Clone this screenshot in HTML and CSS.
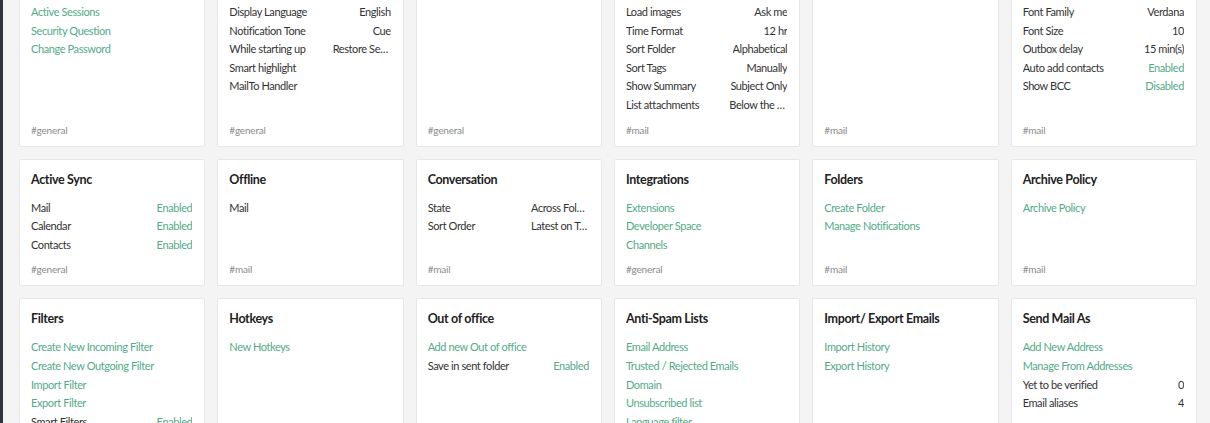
FILE: index.html
```html
<!DOCTYPE html>
<html>
<head>
<meta charset="utf-8">
<link rel="stylesheet" href="styles.css">
</head>
<body>
<div class="app">
  <aside class="rail"></aside>
  <main class="main">
    <div class="grid">
      <section class="card">
        <h3 class="title">Security</h3>
        <div class="items">
          <a class="link">Active Sessions</a>
          <a class="link">Security Question</a>
          <a class="link">Change Password</a>
        </div>
        <div class="tag">#general</div>
      </section>
      <section class="card">
        <h3 class="title">General</h3>
        <div class="items">
          <div class="row"><span class="k">Display Language</span><span class="v">English</span></div>
          <div class="row"><span class="k">Notification Tone</span><span class="v">Cue</span></div>
          <div class="row"><span class="k">While starting up</span><span class="v">Restore Session</span></div>
          <div class="row"><span class="k">Smart highlight</span></div>
          <div class="row"><span class="k">MailTo Handler</span></div>
        </div>
        <div class="tag">#general</div>
      </section>
      <section class="card">
        <h3 class="title">Themes</h3>
        <div class="items"></div>
        <div class="tag">#general</div>
      </section>
      <section class="card">
        <h3 class="title">Mail View Options</h3>
        <div class="items">
          <div class="row"><span class="k">Load images</span><span class="v">Ask me</span></div>
          <div class="row"><span class="k">Time Format</span><span class="v">12 hr</span></div>
          <div class="row"><span class="k">Sort Folder</span><span class="v">Alphabetical</span></div>
          <div class="row"><span class="k">Sort Tags</span><span class="v">Manually</span></div>
          <div class="row"><span class="k">Show Summary</span><span class="v">Subject Only</span></div>
          <div class="row"><span class="k">List attachments</span><span class="v">Below the mail</span></div>
        </div>
        <div class="tag">#mail</div>
      </section>
      <section class="card">
        <h3 class="title">Signature</h3>
        <div class="items"></div>
        <div class="tag">#mail</div>
      </section>
      <section class="card">
        <h3 class="title">Compose</h3>
        <div class="items">
          <div class="row"><span class="k">Font Family</span><span class="v">Verdana</span></div>
          <div class="row"><span class="k">Font Size</span><span class="v">10</span></div>
          <div class="row"><span class="k">Outbox delay</span><span class="v">15 min(s)</span></div>
          <div class="row"><span class="k">Auto add contacts</span><span class="v on">Enabled</span></div>
          <div class="row"><span class="k">Show BCC</span><span class="v on">Disabled</span></div>
        </div>
        <div class="tag">#mail</div>
      </section>

      <section class="card">
        <h3 class="title">Active Sync</h3>
        <div class="items">
          <div class="row"><span class="k">Mail</span><span class="v on">Enabled</span></div>
          <div class="row"><span class="k">Calendar</span><span class="v on">Enabled</span></div>
          <div class="row"><span class="k">Contacts</span><span class="v on">Enabled</span></div>
        </div>
        <div class="tag">#general</div>
      </section>
      <section class="card">
        <h3 class="title">Offline</h3>
        <div class="items">
          <div class="row"><span class="k">Mail</span></div>
        </div>
        <div class="tag">#mail</div>
      </section>
      <section class="card">
        <h3 class="title">Conversation</h3>
        <div class="items">
          <div class="row"><span class="k">State</span><span class="v">Across Folders</span></div>
          <div class="row"><span class="k">Sort Order</span><span class="v">Latest on Top</span></div>
        </div>
        <div class="tag">#mail</div>
      </section>
      <section class="card">
        <h3 class="title">Integrations</h3>
        <div class="items">
          <a class="link">Extensions</a>
          <a class="link">Developer Space</a>
          <a class="link">Channels</a>
        </div>
        <div class="tag">#general</div>
      </section>
      <section class="card">
        <h3 class="title">Folders</h3>
        <div class="items">
          <a class="link">Create Folder</a>
          <a class="link">Manage Notifications</a>
        </div>
        <div class="tag">#mail</div>
      </section>
      <section class="card">
        <h3 class="title">Archive Policy</h3>
        <div class="items">
          <a class="link">Archive Policy</a>
        </div>
        <div class="tag">#mail</div>
      </section>

      <section class="card">
        <h3 class="title">Filters</h3>
        <div class="items">
          <a class="link">Create New Incoming Filter</a>
          <a class="link">Create New Outgoing Filter</a>
          <a class="link">Import Filter</a>
          <a class="link">Export Filter</a>
          <div class="row"><span class="k">Smart Filters</span><span class="v on">Enabled</span></div>
        </div>
        <div class="tag">#mail</div>
      </section>
      <section class="card">
        <h3 class="title">Hotkeys</h3>
        <div class="items">
          <a class="link">New Hotkeys</a>
        </div>
        <div class="tag">#general</div>
      </section>
      <section class="card">
        <h3 class="title">Out of office</h3>
        <div class="items">
          <a class="link">Add new Out of office</a>
          <div class="row"><span class="k">Save in sent folder</span><span class="v on">Enabled</span></div>
        </div>
        <div class="tag">#mail</div>
      </section>
      <section class="card">
        <h3 class="title">Anti-Spam Lists</h3>
        <div class="items">
          <a class="link">Email Address</a>
          <a class="link">Trusted / Rejected Emails</a>
          <a class="link">Domain</a>
          <a class="link">Unsubscribed list</a>
          <a class="link">Language filter</a>
        </div>
        <div class="tag">#mail</div>
      </section>
      <section class="card">
        <h3 class="title">Import/ Export Emails</h3>
        <div class="items">
          <a class="link">Import History</a>
          <a class="link">Export History</a>
        </div>
        <div class="tag">#mail</div>
      </section>
      <section class="card">
        <h3 class="title">Send Mail As</h3>
        <div class="items">
          <a class="link">Add New Address</a>
          <a class="link">Manage From Addresses</a>
          <div class="row"><span class="k">Yet to be verified</span><span class="v">0</span></div>
          <div class="row"><span class="k">Email aliases</span><span class="v">4</span></div>
        </div>
        <div class="tag">#mail</div>
      </section>
    </div>
  </main>
</div>
</body>
</html>
```
FILE: styles.css
```css
html, body {
  margin: 0;
  padding: 0;
  height: 100%;
  overflow: hidden;
  background: #f4f4f4;
  font-family: Lato, "Open Sans", "Liberation Sans", sans-serif;
  color: #333;
}

.app {
  display: flex;
  height: 100%;
}

.rail {
  width: 3px;
  flex: none;
  background: #2f343c;
}

.main {
  flex: 1;
  padding: 0 13px 0 16px;
  overflow: hidden;
}

.grid {
  margin-top: -37px;
  display: grid;
  grid-template-columns: repeat(6, 1fr);
  column-gap: 12px;
  row-gap: 12px;
}

.card {
  background: #fff;
  border: 1px solid #e7e7e7;
  border-radius: 2px;
  padding: 12px 12px 9px 11px;
  display: flex;
  flex-direction: column;
  min-width: 0;
}

.title {
  margin: 0 0 11px;
  font-size: 12.5px;
  line-height: 16px;
  font-weight: 700;
  letter-spacing: -0.35px;
  color: #222;
}

.items {
  display: flex;
  flex-direction: column;
  font-size: 11px;
  letter-spacing: -0.4px;
  margin-bottom: 8px;
  flex: 1;
}

.link {
  display: block;
  line-height: 18.6px;
  color: #52ab86;
  white-space: nowrap;
  overflow: hidden;
  text-overflow: ellipsis;
}

.row {
  display: flex;
  justify-content: space-between;
  line-height: 18.6px;
  gap: 6px;
  color: #333;
}

.k {
  white-space: nowrap;
  overflow: hidden;
  flex: 1;
  min-width: 0;
}

.v {
  white-space: nowrap;
  overflow: hidden;
  text-overflow: ellipsis;
  max-width: 58px;
  text-align: right;
}

.v.on {
  color: #52ab86;
}

.tag {
  font-size: 10px;
  line-height: 14px;
  letter-spacing: -0.2px;
  color: #8a8a8a;
}
```
